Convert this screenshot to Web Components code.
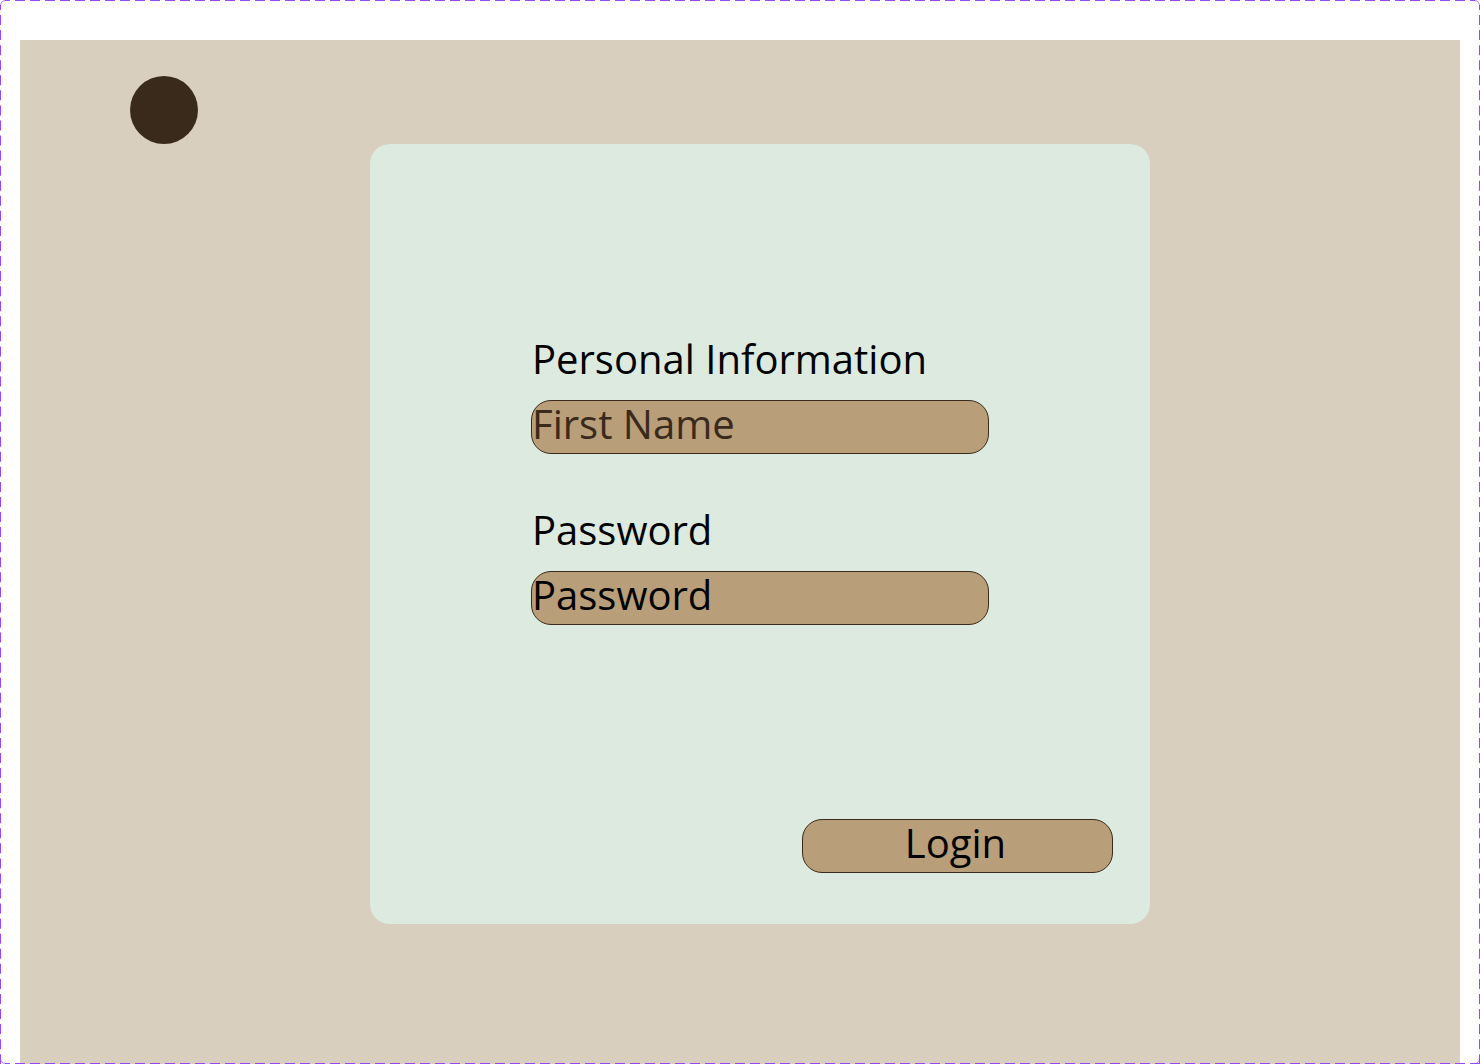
<!DOCTYPE html>
<html lang="en">
<head>
<meta charset="utf-8">
<title>Login</title>
<style>
  html, body { margin: 0; height: 100%; }
  body { background: #fff; font-family: "Open Sans", "Noto Sans", sans-serif; color: #000; }
</style>
</head>
<body>
<login-screen>
  <brand-dot slot="brand"></brand-dot>
  <login-card>
    <text-field label="Personal Information" placeholder="First Name" type="text" tone="soft"></text-field>
    <text-field label="Password" placeholder="Password" type="password"></text-field>
    <pill-button slot="action">Login</pill-button>
  </login-card>
</login-screen>
<script>
  class BaseElement extends HTMLElement {
    render(html) {
      const root = this.attachShadow({ mode: "open" });
      const template = document.createElement("template");
      template.innerHTML = html;
      root.append(template.content.cloneNode(true));
      return root;
    }
  }

  // Page with a dashed outline round the beige frame
  customElements.define("login-screen", class extends BaseElement {
    connectedCallback() {
      this.render(`
        <style>
          :host { display: flex; flex-direction: column; box-sizing: border-box; min-height: 100%; padding: 40px 20px 0; position: relative; }
          .frame { flex: 1; display: flex; flex-direction: column; background: #d8cfbe; }
          header { padding: 36px 110px 0; }
          main { display: flex; justify-content: center; padding: 0 0 40px 40px; }
          .outline { position: absolute; inset: 0; width: 100%; height: 100%; pointer-events: none; fill: none; stroke: #9747ff; stroke-width: 2; }
          .outline svg { overflow: visible; }
          .h { stroke-dasharray: 10 5; }
          .v { stroke-dasharray: 10 5.06; }
          .h, .v { stroke-dashoffset: 5; }
          .corner { stroke-width: 1; stroke-opacity: .7; }
        </style>
        <div class="frame">
          <header><slot name="brand"></slot></header>
          <main><slot></slot></main>
        </div>
        <svg class="outline" aria-hidden="true">
          <svg x="0" y="0"><line class="h" x1="5" y1="0" x2="100%" y2="0"/><line class="v" x1="0" y1="5" x2="0" y2="100%"/></svg>
          <line class="v" x1="100%" y1="5" x2="100%" y2="100%"/>
          <line class="h" x1="5" y1="100%" x2="100%" y2="100%"/>
          <path class="corner" d="M.5 5.5a5 5 0 0 1 5-5"/>
          <svg x="100%" y="0"><path d="M-5-1H1V5H-1L-5 1z" fill="#fff" stroke="none"/><path class="corner" d="M-5.500 .5a5 5 0 0 1 5 5"/></svg>
          <svg x="0" y="100%"><path class="corner" d="M.5-5.500a5 5 0 0 0 5 5"/></svg>
          <svg x="100%" y="100%"><path class="corner" d="M-5.500-.5a5 5 0 0 0 5-5"/></svg>
        </svg>`);
    }
  });

  customElements.define("brand-dot", class extends BaseElement {
    connectedCallback() {
      this.render(`<style>:host { display: block; width: 68px; height: 68px; border-radius: 50%; background: #3a2a1b; }</style>`);
    }
  });

  customElements.define("login-card", class extends BaseElement {
    connectedCallback() {
      this.render(`
        <style>
          :host { display: block; width: 780px; max-width: 100%; }
          form { display: flex; flex-direction: column; box-sizing: border-box; min-height: 780px; padding: 190px 37px 51px; border-radius: 20px; background: #ddeae0; }
          .fields { display: flex; flex-direction: column; gap: 51px; width: 458px; max-width: 100%; align-self: center; }
          .actions { display: flex; justify-content: flex-end; margin-top: auto; }
        </style>
        <form>
          <div class="fields"><slot></slot></div>
          <div class="actions"><slot name="action"></slot></div>
        </form>`);
    }
  });

  customElements.define("text-field", class extends BaseElement {
    connectedCallback() {
      const root = this.render(`
        <style>
          :host { display: flex; flex-direction: column; gap: 16px; --hint: #000; }
          :host([tone="soft"]) { --hint: #3a2a1b; }
          label { padding-left: 1px; font-size: 40px; line-height: 50px; }
          input { box-sizing: border-box; width: 100%; height: 54px; margin: 0; padding: 0 0 7px; border: 1px solid #3a2a1b; border-radius: 20px; background: #b89e79; color: #000; font: inherit; font-size: 40px; outline: none; }
          input::placeholder { color: var(--hint); opacity: 1; }
        </style>
        <label for="field"></label>
        <input id="field">`);
      root.querySelector("label").textContent = this.getAttribute("label");
      const input = root.querySelector("input");
      input.type = this.getAttribute("type");
      input.placeholder = this.getAttribute("placeholder");
    }
  });

  customElements.define("pill-button", class extends BaseElement {
    connectedCallback() {
      this.render(`
        <style>
          :host { display: block; width: 311px; }
          button { box-sizing: border-box; width: 100%; height: 54px; margin: 0; padding: 0 4px 7px 0; border: 1px solid #3a2a1b; border-radius: 20px; background: #b89e79; color: #000; font: inherit; font-size: 40px; line-height: 45px; cursor: pointer; }
        </style>
        <button type="button"><slot></slot></button>`);
    }
  });
</script>
</body>
</html>
